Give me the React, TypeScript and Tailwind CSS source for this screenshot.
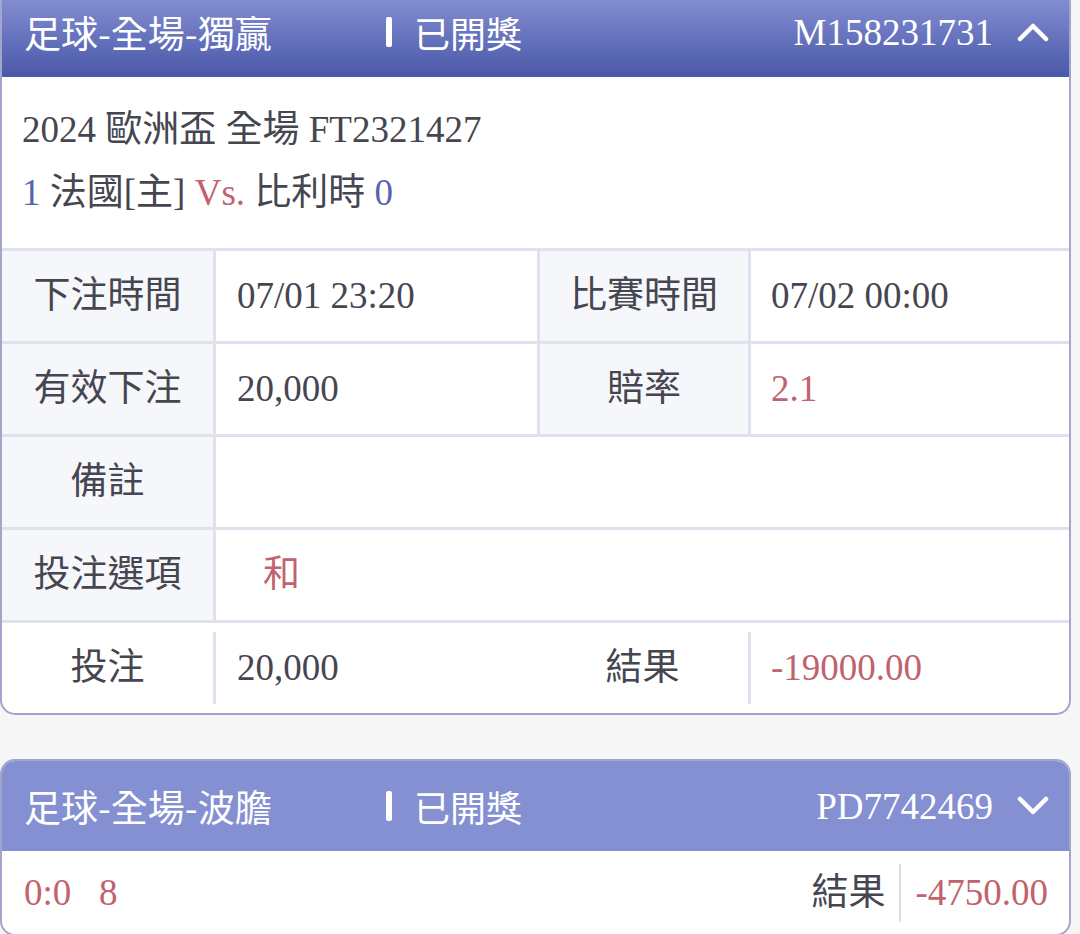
const serif = { fontFamily: '"Liberation Serif", "Noto Sans CJK TC", serif' };

const Chevron = ({ up }: { up?: boolean }) => (
  <svg width="32" height="20" viewBox="0 0 32 20" className="shrink-0">
    <polyline
      points={up ? '3,17 16,4 29,17' : '3,3 16,16 29,3'}
      fill="none"
      stroke="white"
      strokeWidth="4.5"
      strokeLinecap="round"
      strokeLinejoin="round"
    />
  </svg>
);

const Header = ({ title, code, open }: { title: string; code: string; open?: boolean }) => (
  <div
    className={`flex h-[90px] items-center pl-[22px] pr-[20px] text-white ${
      open ? 'bg-gradient-to-b from-[#8c95d7] to-[#4a58a8]' : 'bg-[#8490d1]'
    }`}
  >
    <span className="w-[362px] font-['Noto_Sans_CJK_TC',sans-serif] text-[37px] leading-none">{title}</span>
    <span className="h-[30px] w-[6px] rounded-[2px] bg-white" />
    <span className="ml-[22px] font-['Noto_Sans_CJK_TC',sans-serif] text-[36px] leading-none">已開獎</span>
    <span className="ml-auto mr-[24px] text-[37px] leading-none">{code}</span>
    <Chevron up={open} />
  </div>
);

const Label = ({ children, w }: { children: React.ReactNode; w: string }) => (
  <div className={`${w} flex shrink-0 items-center justify-center bg-[#f6f7fb]`}>{children}</div>
);

export default function App() {
  return (
    <div className="min-h-[934px] bg-[#f6f6f6] pr-[9px]" style={serif}>
      {/* open card */}
      <div className="-mt-[13px] overflow-hidden rounded-b-[15px] border-2 border-t-0 border-[#a2a6cc] bg-white">
        <Header title="足球-全場-獨贏" code="M158231731" open />

        <div className="px-[20px] pt-[21px] pb-[24px] text-[37px] leading-[63px] text-[#45464f]">
          <div>2024 歐洲盃 全場 FT2321427</div>
          <div>
            <span className="text-[#5563b0]">1</span> 法國[主] <span className="text-[#c1626d]">Vs.</span> 比利時{' '}
            <span className="text-[#5563b0]">0</span>
          </div>
        </div>

        <div className="text-[37px] text-[#45464f]">
          <div className="flex h-[93px] border-t-[3px] border-[#e0e1ee]">
            <Label w="w-[211px]">下注時間</Label>
            <div className="flex w-[324px] shrink-0 items-center border-l-[3px] border-[#e0e1ee] pl-[21px]">07/01 23:20</div>
            <div className="flex w-[211px] shrink-0 items-center justify-center border-l-[3px] border-[#e0e1ee] bg-[#f6f7fb]">
              比賽時間
            </div>
            <div className="flex flex-1 items-center border-l-[3px] border-[#e0e1ee] pl-[20px]">07/02 00:00</div>
          </div>

          <div className="flex h-[93px] border-t-[3px] border-[#e0e1ee]">
            <Label w="w-[211px]">有效下注</Label>
            <div className="flex w-[324px] shrink-0 items-center border-l-[3px] border-[#e0e1ee] pl-[21px]">20,000</div>
            <div className="flex w-[211px] shrink-0 items-center justify-center border-l-[3px] border-[#e0e1ee] bg-[#f6f7fb]">
              賠率
            </div>
            <div className="flex flex-1 items-center border-l-[3px] border-[#e0e1ee] pl-[20px] text-[#c1626d]">2.1</div>
          </div>

          <div className="flex h-[93px] border-t-[3px] border-[#e0e1ee]">
            <Label w="w-[211px]">備註</Label>
            <div className="flex-1 border-l-[3px] border-[#e0e1ee]" />
          </div>

          <div className="flex h-[93px] border-t-[3px] border-[#e0e1ee]">
            <Label w="w-[211px]">投注選項</Label>
            <div className="flex flex-1 items-center border-l-[3px] border-[#e0e1ee] pl-[47px] text-[#c1626d]">和</div>
          </div>

          <div className="flex h-[93px] items-center border-t-[3px] border-[#e0e1ee]">
            <div className="flex h-full w-[211px] shrink-0 items-center justify-center">投注</div>
            <div className="h-[72px] w-[3px] bg-[#e0e1ee]" />
            <div className="w-[321px] shrink-0 pl-[21px]">20,000</div>
            <div className="w-[211px] shrink-0 text-center">結果</div>
            <div className="h-[72px] w-[3px] bg-[#e0e1ee]" />
            <div className="flex-1 pl-[20px] text-[#c1626d]">-19000.00</div>
          </div>
        </div>
      </div>

      {/* collapsed card */}
      <div className="mt-[44px] overflow-hidden rounded-[15px] border-2 border-[#a2a6cc] bg-white">
        <Header title="足球-全場-波膽" code="PD7742469" />
        <div className="flex h-[83px] items-center pl-[22px] pr-[21px] text-[37px]">
          <span className="whitespace-pre text-[#c1626d]">0:0   8</span>
          <span className="ml-auto text-[#45464f]">結果</span>
          <span className="mx-[14px] h-[58px] w-[2px] bg-[#dcdde9]" />
          <span className="text-[#c1626d]">-4750.00</span>
        </div>
      </div>
    </div>
  );
}
